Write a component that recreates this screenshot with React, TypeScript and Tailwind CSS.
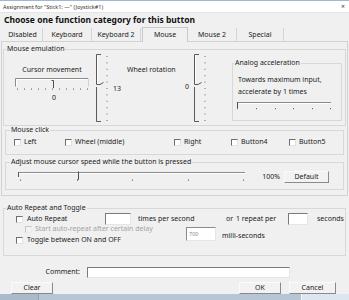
import React from "react";

const Cb = ({ disabled = false }: { disabled?: boolean }) =>
  disabled ? (
    <span className="inline-block w-[7px] h-[7px] shrink-0 bg-[#f3f3f3] border-t border-l border-r border-b border-t-[#c6c6c6] border-l-[#c6c6c6] border-r-[#ececec] border-b-[#ececec]" />
  ) : (
    <span className="inline-block w-[7px] h-[7px] shrink-0 bg-white border-t border-l border-r border-b border-t-[#6e6e6e] border-l-[#6e6e6e] border-r-[#e2e2e2] border-b-[#e2e2e2]" />
  );

const Btn = ({ className, children }: { className: string; children: React.ReactNode }) => (
  <div
    className={
      "flex items-center justify-center bg-[#f2f2f2] border-t border-l border-r border-b border-t-[#fbfbfb] border-l-[#fbfbfb] border-r-[#8a8a8a] border-b-[#8a8a8a] " +
      className
    }
  >
    {children}
  </div>
);

const VSlider = () => {
  const ticks = Array.from({ length: 11 }, (_, i) => 2 + i * 6.4);
  return (
    <svg width="16" height="68" viewBox="0 0 16 68" className="block shrink-0">
      <path d="M6 0.5 H1.5 V30.5 H5 L8.5 28.5" fill="none" stroke="#5a5a5a" strokeWidth="1" />
      <path d="M1.5 33 V67.5 H6" fill="none" stroke="#5a5a5a" strokeWidth="1" />
      <path d="M2.5 1.5 V30" fill="none" stroke="#ffffff" strokeWidth="1" />
      {ticks.map((y, i) => (
        <rect key={i} x="11.5" y={y} width="1" height="1" fill="#6a6a6a" />
      ))}
    </svg>
  );
};

const HSliderCursor = () => {
  const ticks = Array.from({ length: 11 }, (_, i) => 2 + i * 7);
  return (
    <svg width="74" height="14" viewBox="0 0 74 14" className="block">
      <path d="M0.5 9.5 V1.5 H73" fill="none" stroke="#8c8c8c" />
      <path d="M73.5 1.5 V9.5" fill="none" stroke="#d2d2d2" />
      <path d="M1.5 9 V2.5 H72" fill="none" stroke="#ffffff" />
      <path d="M36.5 3.5 H38.5 V11" fill="none" stroke="#4e4e4e" />
      {ticks.map((x, i) => (
        <rect key={i} x={x} y="11.5" width="1" height="1.2" fill="#6a6a6a" />
      ))}
    </svg>
  );
};

const HSliderAnalog = () => {
  const ticks = [2, 21, 40, 58, 77, 95];
  return (
    <svg width="98" height="12" viewBox="0 0 98 12" className="block">
      <path d="M2 3.5 H96" stroke="#8c8c8c" />
      <path d="M3 4.5 H96" stroke="#ffffff" />
      <path d="M2.5 3 V9" stroke="#4e4e4e" />
      {ticks.map((x, i) => (
        <rect key={i} x={x} y="9" width="1" height="1.2" fill="#6a6a6a" />
      ))}
    </svg>
  );
};

const HSliderSpeed = () => {
  const ticks = [4, 61, 116, 172, 227];
  return (
    <svg width="232" height="14" viewBox="0 0 232 14" className="block">
      <path d="M2 3.5 H229" stroke="#8c8c8c" />
      <path d="M3 4.5 H229" stroke="#ffffff" />
      <path d="M2.5 3 V8" stroke="#5a5a5a" />
      <path d="M62.5 2.5 V10.5 L61 11.5" fill="none" stroke="#4e4e4e" />
      {ticks.map((x, i) => (
        <rect key={i} x={x} y="10.5" width="1" height="1.3" fill="#6a6a6a" />
      ))}
    </svg>
  );
};

export default function App() {
  return (
    <div className="w-[349px] h-[300px] overflow-hidden bg-[#f0f0f0] flex flex-col text-[7px] leading-[8px] text-[#1b1b1b] font-['Noto_Sans',sans-serif]">
      {/* title bar */}
      <div className="h-[13px] shrink-0 bg-white border-t border-[#9bb8d4] border-b border-b-[#e4e4e4] flex items-center justify-between pl-[3px] pr-[4px]">
        <span className="text-[5.5px] text-[#333]">Assignment for "Stick1: —" (Joystick#1)</span>
        <span className="text-[7px] text-[#444]">×</span>
      </div>
      {/* heading */}
      <div className="h-[14px] shrink-0 flex items-center pl-[4px] text-[8.5px] font-bold text-[#111]">
        Choose one function category for this button
      </div>
      {/* tabs */}
      <div className="h-[14px] shrink-0 flex items-end pl-[3px] relative z-10">
        <div className="w-[40px] h-[13px] border-r border-[#d4d4d4] flex items-center justify-center">Disabled</div>
        <div className="w-[49px] h-[13px] border-r border-[#d4d4d4] flex items-center justify-center">Keyboard</div>
        <div className="w-[49px] h-[13px] border-r border-[#d4d4d4] flex items-center justify-center">Keyboard 2</div>
        <div className="w-[46px] h-[15px] -mb-px ml-[1px] border-t border-l border-r border-[#c8c8c8] bg-[#f0f0f0] flex items-center justify-center">
          Mouse
        </div>
        <div className="w-[49px] h-[13px] border-r border-[#d4d4d4] flex items-center justify-center">Mouse 2</div>
        <div className="w-[47px] h-[13px] border-r border-[#d4d4d4] flex items-center justify-center">Special</div>
      </div>
      {/* tab panel */}
      <div className="h-[155px] shrink-0 mx-[1px] border border-[#d2d2d2] flex flex-col">
        {/* Mouse emulation */}
        <fieldset className="mt-[3px] mx-[1px] border border-[#d8d8d8]">
          <legend className="ml-[2px] px-[1px] leading-[8px]">Mouse emulation</legend>
          <div className="h-[72px] flex items-start">
            <div className="ml-[11px] w-[74px] flex flex-col">
              <div className="mt-[13px] text-center">Cursor movement</div>
              <div className="mt-[3px]">
                <HSliderCursor />
              </div>
              <div className="mt-[3px] pl-[37px]">0</div>
            </div>
            <div className="ml-[6px] mt-[1px]">
              <VSlider />
            </div>
            <div className="ml-[2px] w-[14px] mt-[32px]">13</div>
            <div className="w-[56px] mt-[13px] whitespace-nowrap">Wheel rotation</div>
            <div className="ml-[2px] w-[6px] mt-[30px]">0</div>
            <div className="ml-[2px] mt-[1px]">
              <VSlider />
            </div>
            <fieldset className="ml-[23px] mt-[6px] w-[110px] border border-[#d8d8d8]">
              <legend className="ml-[1px] px-[1px] leading-[8px]">Analog acceleration</legend>
              <div className="h-[53px] flex flex-col">
                <div className="mt-[9px] pl-[5px] whitespace-nowrap">Towards maximum input,</div>
                <div className="mt-[4px] pl-[5px] whitespace-nowrap">accelerate by 1 times</div>
                <div className="mt-[3px] pl-[2px]">
                  <HSliderAnalog />
                </div>
              </div>
            </fieldset>
          </div>
        </fieldset>
        {/* Mouse click */}
        <fieldset className="mx-[3px] border border-[#d8d8d8]">
          <legend className="ml-[4px] px-[1px] leading-[8px]">Mouse click</legend>
          <div className="h-[20px] flex items-start">
            <div className="mt-[4px] h-[8px] flex items-center">
              <div className="ml-[8px] w-[51px] flex items-center gap-[3px]">
                <Cb />
                <span>Left</span>
              </div>
              <div className="w-[109px] flex items-center gap-[3px]">
                <Cb />
                <span>Wheel (middle)</span>
              </div>
              <div className="w-[57px] flex items-center gap-[3px]">
                <Cb />
                <span>Right</span>
              </div>
              <div className="w-[58px] flex items-center gap-[3px]">
                <Cb />
                <span>Button4</span>
              </div>
              <div className="flex items-center gap-[3px]">
                <Cb />
                <span>Button5</span>
              </div>
            </div>
          </div>
        </fieldset>
        {/* Adjust speed */}
        <fieldset className="mt-[3px] mx-[3px] border border-[#d8d8d8]">
          <legend className="ml-[4px] px-[1px] leading-[8px]">
            Adjust mouse cursor speed while the button is pressed
          </legend>
          <div className="h-[23px] flex items-start">
            <div className="ml-[10px] mt-[3px]">
              <HSliderSpeed />
            </div>
            <div className="w-[36px] mt-[7px] text-right pr-[4px] whitespace-nowrap">100%</div>
            <Btn className="mt-[5px] w-[45px] h-[12px]">Default</Btn>
          </div>
        </fieldset>
      </div>
      {/* Auto repeat */}
      <fieldset className="mt-[8px] mx-[3px] border border-[#d8d8d8]">
        <legend className="ml-[2px] px-[1px] leading-[8px]">Auto Repeat and Toggle</legend>
        <div className="h-[43px] flex flex-col">
          <div className="mt-[1px] h-[12px] flex items-center">
            <div className="ml-[12px] w-[89px] flex items-center gap-[4px]">
              <Cb />
              <span>Auto Repeat</span>
            </div>
            <div className="w-[26px] h-[12px] bg-white border-t border-l border-r border-b border-t-[#7a7a7a] border-l-[#7a7a7a] border-r-[#e6e6e6] border-b-[#e6e6e6]" />
            <div className="w-[95px] pl-[7px] whitespace-nowrap">times per second</div>
            <div className="w-[10px]">or</div>
            <div className="w-[52px] whitespace-nowrap">1 repeat per</div>
            <div className="w-[20px] h-[12px] bg-white border-t border-l border-r border-b border-t-[#7a7a7a] border-l-[#7a7a7a] border-r-[#e6e6e6] border-b-[#e6e6e6]" />
            <div className="ml-[9px]">seconds</div>
          </div>
          <div className="flex items-start">
            <div className="w-[182px] flex flex-col">
              <div className="h-[8px] flex items-center gap-[3px] pl-[21px] text-[#a3a3a3]">
                <Cb disabled />
                <span className="whitespace-nowrap">Start auto-repeat after certain delay</span>
              </div>
              <div className="mt-[3px] h-[8px] flex items-center gap-[4px] pl-[12px]">
                <Cb />
                <span className="whitespace-nowrap">Toggle between ON and OFF</span>
              </div>
            </div>
            <div className="mt-[2px] w-[30px] h-[14px] bg-white border-t border-l border-r border-b border-t-[#8a8a8a] border-l-[#8a8a8a] border-r-[#e6e6e6] border-b-[#e6e6e6] flex items-center pl-[2px] text-[5.5px] text-[#8a8a8a]">
              700
            </div>
            <div className="ml-[6px] mt-[7px] whitespace-nowrap">milli-seconds</div>
          </div>
        </div>
      </fieldset>
      {/* comment */}
      <div className="mt-[10px] h-[12px] flex items-center">
        <div className="w-[80px] text-right">Comment:</div>
        <div className="ml-[7px] w-[203px] h-[11px] bg-white border-t border-l border-r border-b border-t-[#7a7a7a] border-l-[#7a7a7a] border-r-[#e6e6e6] border-b-[#e6e6e6]" />
      </div>
      {/* buttons */}
      <div className="mt-[4px] h-[12px] flex items-center">
        <Btn className="ml-[11px] w-[42px] h-[12px]">Clear</Btn>
        <Btn className="ml-[186px] w-[42px] h-[12px]">OK</Btn>
        <Btn className="ml-[8px] w-[47px] h-[12px]">Cancel</Btn>
      </div>
      {/* bottom strip */}
      <div className="mt-auto h-[6px] flex">
        <div className="w-[39px] bg-[#a9bacc] border-r border-[#8ea2b8]" />
        <div className="w-[262px] bg-[#b7c6d6]" />
        <div className="flex-1 bg-[#dde6ef] border-l border-[#f4f8fb]" />
      </div>
    </div>
  );
}
